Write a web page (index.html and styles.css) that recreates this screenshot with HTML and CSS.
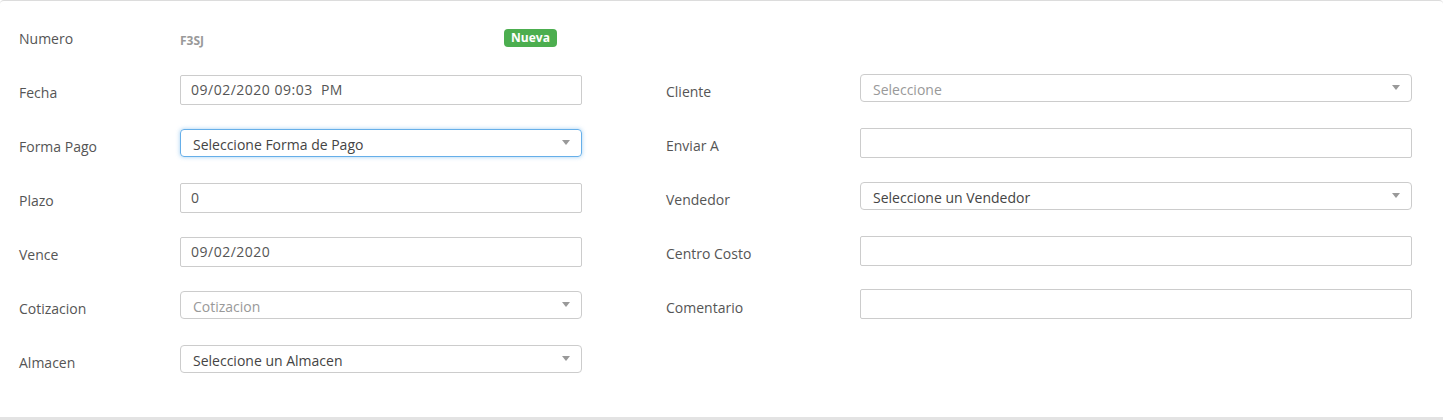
FILE: index.html
```html
<!DOCTYPE html>
<html lang="es">
<head>
<meta charset="utf-8">
<title>Factura</title>
<link rel="stylesheet" href="styles.css">
</head>
<body>
<div class="card">
  <div class="row numero-row">
    <label class="lbl">Numero</label>
    <div class="numero-val">
      <span class="code">F3SJ</span>
      <span class="badge">Nueva</span>
    </div>
  </div>
  <div class="columns">
    <div class="col col-left">
      <div class="row"><label class="lbl">Fecha</label><div class="input">09/02/2020 09:03&nbsp; PM</div></div>
      <div class="row"><label class="lbl">Forma Pago</label><div class="select focus"><span class="val">Seleccione Forma de Pago</span><span class="caret"></span></div></div>
      <div class="row"><label class="lbl">Plazo</label><div class="input">0</div></div>
      <div class="row"><label class="lbl">Vence</label><div class="input">09/02/2020</div></div>
      <div class="row"><label class="lbl">Cotizacion</label><div class="select"><span class="val ph">Cotizacion</span><span class="caret"></span></div></div>
      <div class="row"><label class="lbl">Almacen</label><div class="select"><span class="val">Seleccione un Almacen</span><span class="caret"></span></div></div>
    </div>
    <div class="col col-right">
      <div class="row"><label class="lbl">Cliente</label><div class="select"><span class="val ph">Seleccione</span><span class="caret"></span></div></div>
      <div class="row"><label class="lbl">Enviar A</label><div class="input"></div></div>
      <div class="row"><label class="lbl">Vendedor</label><div class="select"><span class="val">Seleccione un Vendedor</span><span class="caret"></span></div></div>
      <div class="row"><label class="lbl">Centro Costo</label><div class="input"></div></div>
      <div class="row"><label class="lbl">Comentario</label><div class="input"></div></div>
    </div>
  </div>
</div>
</body>
</html>
```
FILE: styles.css
```css
* { box-sizing: border-box; }
html, body { margin: 0; padding: 0; background: #fff; }
body {
  font-family: "Open Sans", "Liberation Sans", sans-serif;
  font-size: 14px;
  color: #555;
}
.card {
  width: 1443px;
  height: 420px;
  border-top: 1px solid #dcdcdc;
  border-bottom: 3px solid #e3e3e3;
  border-radius: 4px 4px 0 0;
  padding: 20px 0 0 19px;
}
.row {
  display: flex;
  align-items: flex-start;
  height: 54px;
}
.lbl {
  display: block;
  padding-top: 8px;
  line-height: 20px;
  color: #555;
}
.numero-row .lbl { width: 161px; }
.numero-val {
  display: flex;
  align-items: flex-start;
  padding-top: 7px;
}
.code {
  width: 324px;
  padding-top: 4px;
  font-size: 12px;
  font-weight: 700;
  color: #999;
  line-height: 17px;
}
.badge {
  display: inline-block;
  width: 53px;
  height: 18px;
  line-height: 18px;
  background: #4cae4f;
  color: #fff;
  font-size: 12px;
  font-weight: 700;
  text-align: center;
  border-radius: 4px;
  margin-top: 1px;
}
.columns {
  display: flex;
}
.col-left .lbl { width: 161px; }
.col-left .input, .col-left .select { width: 402px; }
.col-right { margin-left: 84px; margin-top: -1px; }
.col-right .lbl { width: 194px; }
.col-right .input, .col-right .select { width: 552px; }
.col-right .row:last-child .input { margin-top: -1px; }
.input {
  height: 30px;
  border: 1px solid #ccc;
  border-radius: 2px;
  padding: 0 10px;
  line-height: 28px;
  letter-spacing: 0.5px;
  color: #555;
}
.select {
  height: 28px;
  border: 1px solid #ccc;
  border-radius: 4px;
  padding: 0 11px 0 12px;
  display: flex;
  align-items: center;
  justify-content: space-between;
  color: #444;
}
.select .val { line-height: 26px; padding-top: 4px; }
.select .ph { color: #999; }
.select.focus {
  border-color: #66afe9;
  box-shadow: 0 0 4px rgba(102, 175, 233, 0.6);
}
.caret {
  width: 0;
  height: 0;
  border-style: solid;
  border-width: 5px 4px 0 4px;
  border-color: #999 transparent transparent transparent;
  margin-top: -1px;
}
```
